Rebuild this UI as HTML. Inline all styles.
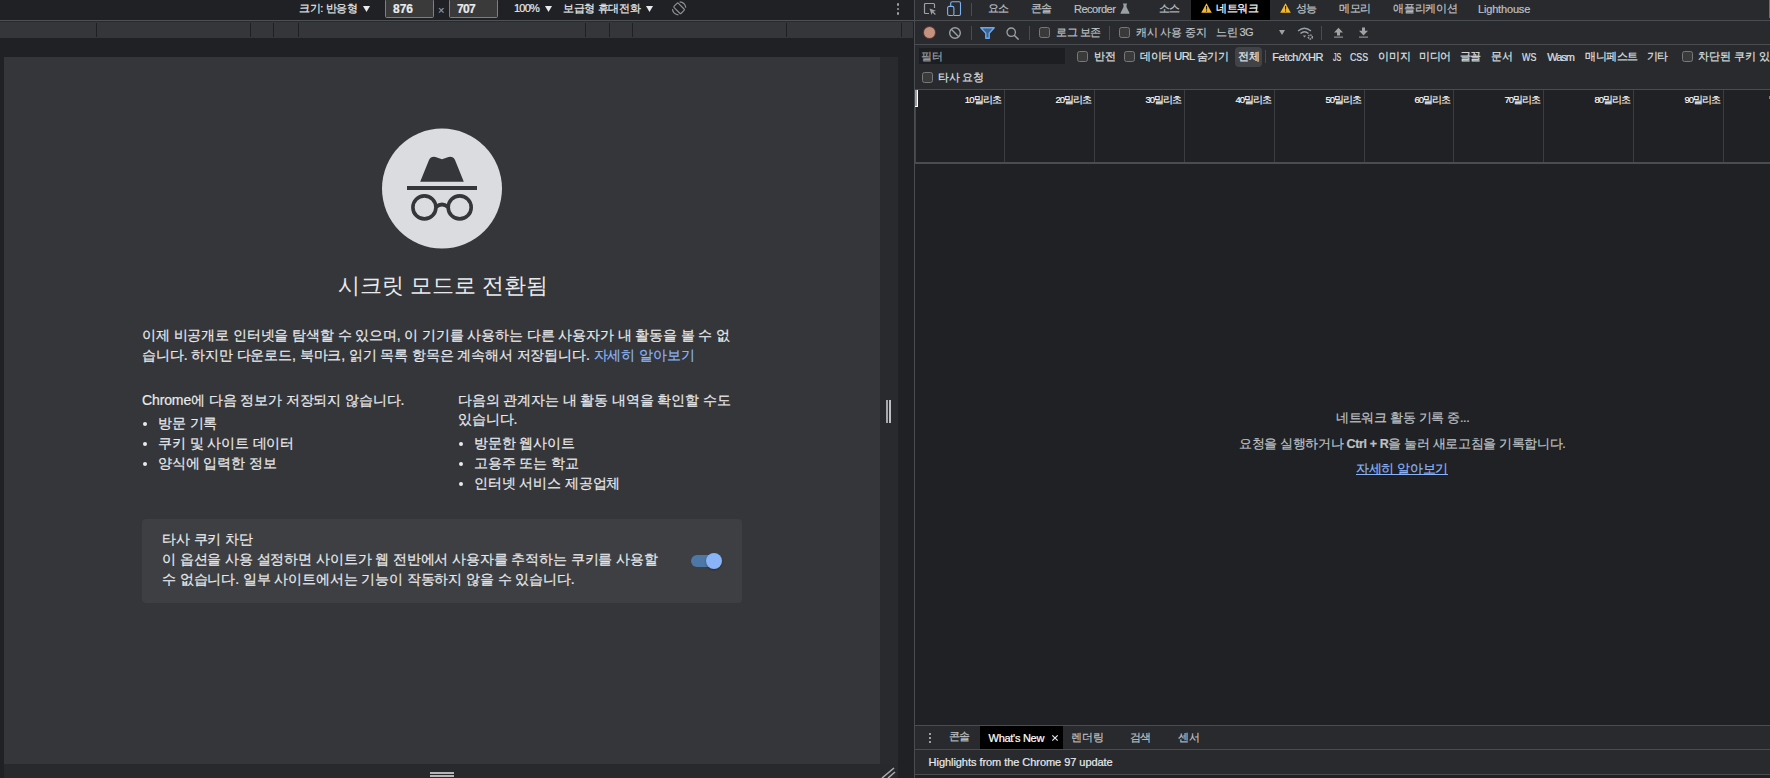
<!DOCTYPE html>
<html><head><meta charset="utf-8">
<style>
*{box-sizing:border-box;margin:0;padding:0}
html,body{width:1770px;height:778px;overflow:hidden;background:#202124;font-family:"Liberation Sans",sans-serif;color:#e8eaed}
.a{position:absolute}
.t{position:absolute;white-space:nowrap;line-height:1}
/* emulator */
#emtop{left:0;top:0;width:914px;height:20px;background:#202124}
#emline{left:0;top:20px;width:914px;height:1px;background:#4d5054;border-bottom:1px solid #292a2d;height:2px}
#ruler{left:0;top:22px;width:913px;height:16px;background:#35363a}
.tick{position:absolute;top:1px;width:1px;height:14px;background:#1f2023}
#page{left:4px;top:57px;width:876px;height:707px;background:#35363a}
#vscroll{left:880px;top:57px;width:18px;height:707px;background:#292a2d}
#hstrip{left:4px;top:764px;width:894px;height:14px;background:#28292d}
.etxt{font-size:11px;color:#e8eaed;-webkit-text-stroke-width:0.2px}
.inp{position:absolute;top:-2px;height:20px;background:#3b3a3a;border:1px solid #7d807f;border-radius:1.5px}
/* devtools */
#dtborder{left:914px;top:0;width:1px;height:778px;background:#494c50}
#dt{left:915px;top:0;width:855px;height:778px;background:#202124}
.tb{position:absolute;left:0;width:855px;background:#292a2d}
.hl{position:absolute;left:0;width:855px;height:1px;background:#494c50}
.dtx{font-size:11px;color:#bdc1c6;-webkit-text-stroke-width:0.2px}
.cb{position:absolute;width:11px;height:11px;border:1px solid #76787b;border-radius:2.5px;background:#3b3a3a}
.vsep{position:absolute;width:1px;height:14px;background:#494c50}
.ptx{font-size:14px;letter-spacing:-0.12px;color:#e8eaed;-webkit-text-stroke-width:0.2px}
.bul{position:absolute;width:4px;height:4px;border-radius:50%;background:#e8eaed}
.tl{font-size:9.5px;color:#fff;-webkit-text-stroke-width:0.15px}
</style></head><body>

<!-- ================= EMULATOR (left) ================= -->
<div id="emtop" class="a"></div>
<div id="emline" class="a"></div>
<div id="ruler" class="a">
  <div class="tick" style="left:96px"></div>
  <div class="tick" style="left:250px"></div>
  <div class="tick" style="left:273px"></div>
  <div class="tick" style="left:298px"></div>
  <div class="tick" style="left:585px"></div>
  <div class="tick" style="left:609px"></div>
  <div class="tick" style="left:632px"></div>
  <div class="tick" style="left:786px"></div>
  <div class="tick" style="left:901px"></div>
</div>
<div id="page" class="a"></div>
<div id="vscroll" class="a"></div>
<div id="hstrip" class="a"></div>

<!-- emulator toolbar -->
<div class="t etxt" style="left:299.0px;top:3px;letter-spacing:-0.33px">크기: 반응형</div>
<svg class="a" style="left:362.5px;top:5.5px" width="7" height="6" viewBox="0 0 7 6"><path d="M0 0 H7 L3.5 6 Z" fill="#e8eaed"/></svg>
<div class="a inp" style="left:385px;top:-1px;width:49px;height:19px"></div>
<div class="t etxt" style="left:393.0px;top:3px;font-size:12px;font-weight:bold">876</div>
<div class="t etxt" style="left:438px;top:5px;font-size:11px;color:#9aa0a6">&#215;</div>
<div class="a inp" style="left:449px;top:-1px;width:49px;height:19px"></div>
<div class="t etxt" style="left:457.0px;top:3px;font-size:12px;font-weight:bold;letter-spacing:-0.70px">707</div>
<div class="t etxt" style="left:514.0px;top:3px;letter-spacing:-0.80px">100%</div>
<svg class="a" style="left:545px;top:5.5px" width="7" height="6" viewBox="0 0 7 6"><path d="M0 0 H7 L3.5 6 Z" fill="#e8eaed"/></svg>
<div class="t etxt" style="left:563.0px;top:3px;letter-spacing:-0.33px">보급형 휴대전화</div>
<svg class="a" style="left:645.5px;top:5.5px" width="7" height="6" viewBox="0 0 7 6"><path d="M0 0 H7 L3.5 6 Z" fill="#e8eaed"/></svg>
<svg class="a" style="left:671px;top:1px" width="16" height="16" viewBox="0 0 16 16"><g fill="none" stroke="#8d9093" stroke-width="1.2"><rect x="3.1" y="4.3" width="10" height="6" rx="1" transform="rotate(45 8.1 7.3)"/><path d="M8.6 0.8 A6.8 6.8 0 0 1 14.8 6.6"/><path d="M1.4 8.2 A6.8 6.8 0 0 0 7.4 13.9"/></g></svg>
<div class="a" style="left:896.8px;top:3.3px;width:2.5px;height:2.5px;background:#9aa0a6;border-radius:50%"></div>
<div class="a" style="left:896.8px;top:7.8px;width:2.5px;height:2.5px;background:#9aa0a6;border-radius:50%"></div>
<div class="a" style="left:896.8px;top:12.3px;width:2.5px;height:2.5px;background:#9aa0a6;border-radius:50%"></div>

<!-- page content -->
<svg class="a" style="left:382px;top:128px" width="120" height="121" viewBox="382 128 120 121">
  <circle cx="442" cy="188.6" r="60" fill="#dadce0"/>
  <path d="M420.2,181.8 L429,160 Q431,156 435.5,157 L442,159.2 L448.5,157 Q453,156 455,160 L463.8,181.8 Z" fill="#35363a"/>
  <rect x="407" y="186" width="70" height="4" fill="#35363a"/>
  <circle cx="424.4" cy="207.4" r="11.5" fill="none" stroke="#35363a" stroke-width="3.6"/>
  <circle cx="459.7" cy="207.4" r="11.5" fill="none" stroke="#35363a" stroke-width="3.6"/>
  <path d="M436,207 Q442,202 448,207" fill="none" stroke="#35363a" stroke-width="3.8"/>
</svg>
<div class="t" id="title" style="left:338px;top:275px;font-size:21.8px;color:#e8eaed">시크릿 모드로 전환됨</div>
<div class="t ptx" style="left:142px;top:328px">이제 비공개로 인터넷을 탐색할 수 있으며, 이 기기를 사용하는 다른 사용자가 내 활동을 볼 수 없</div>
<div class="t ptx" style="left:142px;top:348px">습니다. 하지만 다운로드, 북마크, 읽기 목록 항목은 계속해서 저장됩니다. <span style="color:#8ab4f8">자세히 알아보기</span></div>
<div class="t ptx" style="left:142px;top:393px">Chrome에 다음 정보가 저장되지 않습니다.</div>
<div class="bul" style="left:143px;top:422px"></div><div class="t ptx" style="left:158px;top:416px">방문 기록</div>
<div class="bul" style="left:143px;top:442px"></div><div class="t ptx" style="left:158px;top:436px">쿠키 및 사이트 데이터</div>
<div class="bul" style="left:143px;top:462px"></div><div class="t ptx" style="left:158px;top:456px">양식에 입력한 정보</div>
<div class="t ptx" style="left:458px;top:393px">다음의 관계자는 내 활동 내역을 확인할 수도</div>
<div class="t ptx" style="left:458px;top:412px">있습니다.</div>
<div class="bul" style="left:458.5px;top:442px"></div><div class="t ptx" style="left:474px;top:436px">방문한 웹사이트</div>
<div class="bul" style="left:458.5px;top:462px"></div><div class="t ptx" style="left:474px;top:456px">고용주 또는 학교</div>
<div class="bul" style="left:458.5px;top:482px"></div><div class="t ptx" style="left:474px;top:476px">인터넷 서비스 제공업체</div>
<div class="a" style="left:142px;top:519px;width:600px;height:84px;background:#3d3f42;border-radius:4px"></div>
<div class="t ptx" style="left:162px;top:532px">타사 쿠키 차단</div>
<div class="t ptx" style="left:162px;top:552px">이 옵션을 사용 설정하면 사이트가 웹 전반에서 사용자를 추적하는 쿠키를 사용할</div>
<div class="t ptx" style="left:162px;top:572px">수 없습니다. 일부 사이트에서는 기능이 작동하지 않을 수 있습니다.</div>
<div class="a" style="left:691px;top:555px;width:30px;height:12px;background:#4d77a5;border-radius:6px"></div>
<div class="a" style="left:706px;top:553px;width:16px;height:16px;background:#8ab4f8;border-radius:50%;box-shadow:0 1px 2px rgba(0,0,0,.3)"></div>
<div class="a" style="left:886px;top:400px;width:2px;height:23px;background:#a6a8ab"></div>
<div class="a" style="left:889px;top:400px;width:2px;height:23px;background:#bcbec1"></div>
<div class="a" style="left:430px;top:772px;width:24px;height:2px;background:#b4b6b9"></div>
<div class="a" style="left:430px;top:775px;width:24px;height:2px;background:#b4b6b9"></div>
<svg class="a" style="left:880px;top:764px" width="18" height="14" viewBox="0 0 18 14"><path d="M2 14 L14 4 M8 14 L15 8" stroke="#a9abae" stroke-width="1.6"/></svg>


<!-- ================= DEVTOOLS (right) ================= -->
<div id="dtborder" class="a"></div>
<div id="dt" class="a">
  <div class="tb" style="top:0;height:20px"></div>
  <div class="hl" style="top:20px"></div>
  <div class="tb" style="top:21px;height:23px"></div>
  <div class="hl" style="top:44px"></div>
  <div class="tb" style="top:45px;height:44px"></div>
  <div class="hl" style="top:89px"></div>
  <div class="hl" style="top:162px;height:2px"></div>
  <div class="hl" style="top:725px"></div>
  <div class="tb" style="top:726px;height:23px"></div>
  <div class="hl" style="top:749px"></div>
  <div class="tb" style="top:750px;height:24px"></div>
  <div class="hl" style="top:774px"></div>
</div>

<!-- devtools tab bar -->
<svg class="a" style="left:923px;top:2px" width="14" height="14" viewBox="0 0 14 14"><path d="M6 11.5 H2.5 Q1.5 11.5 1.5 10.5 V2.5 Q1.5 1.5 2.5 1.5 H10.5 Q11.5 1.5 11.5 2.5 V6" fill="none" stroke="#9aa0a6" stroke-width="1.2"/><path d="M6.5 6.5 L13 8.7 L10.3 9.6 L12.8 12.1 L12 12.9 L9.5 10.4 L8.6 13 Z" fill="#9aa0a6"/></svg>
<svg class="a" style="left:946px;top:1px" width="16" height="16" viewBox="0 0 16 16"><g fill="none" stroke="#7cb2f4" stroke-width="1.1"><path d="M4.7 5 V2.3 Q4.7 0.8 6.2 0.8 H13 Q14.5 0.8 14.5 2.3 V13 Q14.5 14.5 13 14.5 H8"/><rect x="1.6" y="5.4" width="6.3" height="9.1" rx="1.6"/></g></svg>
<div class="vsep" style="left:971px;top:3px;height:13px"></div>
<div class="t dtx" style="left:988.0px;top:3px;letter-spacing:-1.20px">요소</div>
<div class="t dtx" style="left:1031.0px;top:3px;letter-spacing:-0.80px">콘솔</div>
<div class="t dtx" style="left:1074.0px;top:4px;letter-spacing:-0.49px">Recorder</div>
<svg class="a" style="left:1120px;top:3px" width="10" height="11" viewBox="0 0 10 11"><path d="M3 0.5 H7 V1.5 H6.5 V4 L9.5 10 Q9.8 10.7 9 10.7 H1 Q0.2 10.7 0.5 10 L3.5 4 V1.5 H3 Z" fill="#9aa0a6"/></svg>
<div class="t dtx" style="left:1158.8px;top:3px;letter-spacing:-1.20px">소스</div>
<div class="a" style="left:1191px;top:0;width:79px;height:20px;background:#000"></div>
<svg class="a" style="left:1201px;top:3px" width="11" height="10" viewBox="0 0 11 10"><path d="M5.5 0.3 L10.8 9.7 H0.2 Z" fill="#f2b72f"/><rect x="5" y="3" width="1.1" height="3.6" fill="#202124"/><rect x="5" y="7.4" width="1.1" height="1.2" fill="#202124"/></svg>
<div class="t dtx" style="left:1216.0px;top:3px;color:#fff;letter-spacing:-0.33px">네트워크</div>
<svg class="a" style="left:1280px;top:3px" width="11" height="10" viewBox="0 0 11 10"><path d="M5.5 0.3 L10.8 9.7 H0.2 Z" fill="#f2b72f"/><rect x="5" y="3" width="1.1" height="3.6" fill="#202124"/><rect x="5" y="7.4" width="1.1" height="1.2" fill="#202124"/></svg>
<div class="t dtx" style="left:1296.0px;top:3px;letter-spacing:-0.80px">성능</div>
<div class="t dtx" style="left:1339.0px;top:3px;letter-spacing:-0.40px">메모리</div>
<div class="t dtx" style="left:1393.0px;top:3px;letter-spacing:-0.22px">애플리케이션</div>
<div class="t dtx" style="left:1478.0px;top:4px;letter-spacing:-0.17px">Lighthouse</div>
<div class="a" style="left:1769px;top:0;width:1px;height:18px;background:#6b6e72"></div>

<!-- toolbar 2 -->
<div class="a" style="left:924px;top:27px;width:11px;height:11px;border-radius:50%;background:#c4937f;box-shadow:0 0 0 1px rgba(150,70,70,.55)"></div>
<svg class="a" style="left:948px;top:26px" width="14" height="14" viewBox="0 0 14 14"><circle cx="7" cy="7" r="5.3" fill="none" stroke="#9aa0a6" stroke-width="1.4"/><path d="M3.3 3.3 L10.7 10.7" stroke="#9aa0a6" stroke-width="1.4"/></svg>
<div class="vsep" style="left:971px;top:26px;height:14px"></div>
<svg class="a" style="left:980px;top:27px" width="15" height="12" viewBox="0 0 15 12"><path d="M0.8 0.8 H14.2 L9.2 6.3 V11.2 H5.8 V6.3 Z" fill="#3d6290" stroke="#6aa8f0" stroke-width="1.4" stroke-linejoin="round"/></svg>
<svg class="a" style="left:1006px;top:27px" width="14" height="13" viewBox="0 0 14 13"><circle cx="5.2" cy="5.2" r="4.2" fill="none" stroke="#9aa0a6" stroke-width="1.3"/><path d="M8.3 8.3 L12.6 12.6" stroke="#9aa0a6" stroke-width="1.5"/></svg>
<div class="vsep" style="left:1029px;top:26px;height:14px"></div>
<div class="cb" style="left:1039px;top:27px"></div>
<div class="t dtx" style="left:1056.0px;top:27px;letter-spacing:-0.45px">로그 보존</div>
<div class="vsep" style="left:1109px;top:26px;height:14px"></div>
<div class="cb" style="left:1119px;top:27px"></div>
<div class="t dtx" style="left:1136.0px;top:27px;letter-spacing:-0.20px">캐시 사용 중지</div>
<div class="t dtx" style="left:1216.2px;top:27px;letter-spacing:-0.60px">느린 3G</div>
<svg class="a" style="left:1279px;top:30px" width="6" height="5" viewBox="0 0 6 5"><path d="M0 0 H6 L3 5 Z" fill="#9aa0a6"/></svg>
<svg class="a" style="left:1297px;top:26px" width="17" height="14" viewBox="0 0 17 14"><g fill="none" stroke="#9aa0a6" stroke-width="1.4"><path d="M1 5 Q7.5 -0.5 14 5"/><path d="M3.5 7.5 Q7.5 4 11.5 7.5"/></g><path d="M5.8 9.6 H9.2 L7.5 11.4 Z" fill="#9aa0a6"/><circle cx="13.3" cy="11" r="2" fill="none" stroke="#9aa0a6" stroke-width="1.6" stroke-dasharray="1.4 0.7"/></svg>
<div class="vsep" style="left:1321px;top:26px;height:14px"></div>
<svg class="a" style="left:1333px;top:27px" width="11" height="11" viewBox="0 0 11 11"><path d="M5.5 0.8 L10 5.5 H7 V8.5 H4 V5.5 H1 Z" fill="#a0a3a3"/><rect x="1" y="9.6" width="9" height="1" fill="#a0a3a3"/></svg>
<svg class="a" style="left:1358px;top:27px" width="11" height="11" viewBox="0 0 11 11"><path d="M4 0.5 H7 V3.8 H10 L5.5 8.5 L1 3.8 H4 Z" fill="#a0a3a3"/><rect x="1" y="9.6" width="9" height="1" fill="#a0a3a3"/></svg>

<!-- filter row -->
<div class="a" style="left:919px;top:48px;width:146px;height:16px;background:#1d1e21"></div>
<div class="t dtx" style="left:921.0px;top:51px;color:#9aa0a6">필터</div>
<div class="cb" style="left:1077px;top:51px"></div>
<div class="t dtx" style="left:1093.8px;top:51px;color:#dfe1e4">반전</div>
<div class="cb" style="left:1124px;top:51px"></div>
<div class="t dtx" style="left:1140.0px;top:51px;letter-spacing:-0.47px;color:#dfe1e4">데이터 URL 숨기기</div>
<div class="a" style="left:1235px;top:47px;width:27px;height:20px;background:#424347;border-radius:4px"></div>
<div class="t dtx" style="left:1237.8px;top:51px;color:#e8eaed">전체</div>
<div class="vsep" style="left:1265px;top:50px;height:13px"></div>
<div class="t dtx" style="left:1272.2px;top:52px;letter-spacing:-0.31px;color:#dfe1e4">Fetch/XHR</div>
<div class="t dtx" style="left:1333px;top:52px;color:#dfe1e4;transform:scaleX(0.64);transform-origin:0 0">JS</div>
<div class="t dtx" style="left:1350px;top:52px;color:#dfe1e4;transform:scaleX(0.80);transform-origin:0 0">CSS</div>
<div class="t dtx" style="left:1378.0px;top:51px;color:#dfe1e4">이미지</div>
<div class="t dtx" style="left:1419.0px;top:51px;letter-spacing:-0.40px;color:#dfe1e4">미디어</div>
<div class="t dtx" style="left:1460.0px;top:51px;letter-spacing:-1.00px;color:#dfe1e4">글꼴</div>
<div class="t dtx" style="left:1491.0px;top:51px;color:#dfe1e4">문서</div>
<div class="t dtx" style="left:1522.4px;top:52px;color:#dfe1e4;transform:scaleX(0.81);transform-origin:0 0">WS</div>
<div class="t dtx" style="left:1547.3px;top:52px;letter-spacing:-1.06px;color:#dfe1e4">Wasm</div>
<div class="t dtx" style="left:1585.0px;top:51px;letter-spacing:-0.48px;color:#dfe1e4">매니페스트</div>
<div class="t dtx" style="left:1647.0px;top:51px;letter-spacing:-0.90px;color:#dfe1e4">기타</div>
<div class="cb" style="left:1682px;top:51px"></div>
<div class="t dtx" style="left:1698px;top:51px;color:#dfe1e4">차단된 쿠키 있는 요청</div>
<div class="cb" style="left:922px;top:72px"></div>
<div class="t dtx" style="left:938.0px;top:72px;letter-spacing:-0.20px;color:#dfe1e4">타사 요청</div>

<!-- timeline -->
<div class="a" style="left:915px;top:90px;width:3px;height:17px;background:#9ea3ab;border-right:1px solid #fff;border-bottom:1px solid #fff"></div>
<div class="a" style="left:915px;top:107px;width:1px;height:55px;background:#3d4566"></div>
<div class="a" style="left:1004px;top:90px;width:1px;height:72px;background:#3c3d40"></div>
<div class="t tl" style="left:964.8px;top:95px;letter-spacing:-0.85px">10밀리초</div>
<div class="a" style="left:1094px;top:90px;width:1px;height:72px;background:#3c3d40"></div>
<div class="t tl" style="left:1055.6px;top:95px;letter-spacing:-1.10px">20밀리초</div>
<div class="a" style="left:1184px;top:90px;width:1px;height:72px;background:#3c3d40"></div>
<div class="t tl" style="left:1145.6px;top:95px;letter-spacing:-1.10px">30밀리초</div>
<div class="a" style="left:1274px;top:90px;width:1px;height:72px;background:#3c3d40"></div>
<div class="t tl" style="left:1235.6px;top:95px;letter-spacing:-1.10px">40밀리초</div>
<div class="a" style="left:1364px;top:90px;width:1px;height:72px;background:#3c3d40"></div>
<div class="t tl" style="left:1325.6px;top:95px;letter-spacing:-1.10px">50밀리초</div>
<div class="a" style="left:1453px;top:90px;width:1px;height:72px;background:#3c3d40"></div>
<div class="t tl" style="left:1414.6px;top:95px;letter-spacing:-1.10px">60밀리초</div>
<div class="a" style="left:1543px;top:90px;width:1px;height:72px;background:#3c3d40"></div>
<div class="t tl" style="left:1504.6px;top:95px;letter-spacing:-1.10px">70밀리초</div>
<div class="a" style="left:1633px;top:90px;width:1px;height:72px;background:#3c3d40"></div>
<div class="t tl" style="left:1594.6px;top:95px;letter-spacing:-1.10px">80밀리초</div>
<div class="a" style="left:1723px;top:90px;width:1px;height:72px;background:#3c3d40"></div>
<div class="t tl" style="left:1684.6px;top:95px;letter-spacing:-1.10px">90밀리초</div>
<div class="a" style="left:1769px;top:96px;width:1px;height:3px;background:#3a8ee6"></div>

<!-- center message -->
<div class="t dtx" style="left:1336.0px;top:412px;font-size:12.5px;letter-spacing:-0.29px">네트워크 활동 기록 중...</div>
<div class="t dtx" style="left:1239.0px;top:438px;font-size:12.5px;letter-spacing:-0.35px">요청을 실행하거나 <b style="color:#bdc1c6">Ctrl + R</b>을 눌러 새로고침을 기록합니다.</div>
<div class="t dtx" style="left:1356.0px;top:463px;font-size:12.5px;color:#8ab4f8;text-decoration:underline;letter-spacing:-0.31px">자세히 알아보기</div>

<!-- drawer -->
<div class="a" style="left:929px;top:733px;width:2px;height:2px;background:#9aa0a6"></div>
<div class="a" style="left:929px;top:737px;width:2px;height:2px;background:#9aa0a6"></div>
<div class="a" style="left:929px;top:741px;width:2px;height:2px;background:#9aa0a6"></div>
<div class="t dtx" style="left:949.0px;top:731px;letter-spacing:-0.80px">콘솔</div>
<div class="a" style="left:980px;top:726px;width:83px;height:23px;background:#000"></div>
<div class="t dtx" style="left:988.6px;top:733px;color:#fff;letter-spacing:-0.29px">What's New</div>
<svg class="a" style="left:1051px;top:734px" width="8" height="8" viewBox="0 0 8 8"><path d="M1.3 1.3 L6.7 6.7 M6.7 1.3 L1.3 6.7" stroke="#e8eaed" stroke-width="1.15"/></svg>
<div class="t dtx" style="left:1071.0px;top:732px">렌더링</div>
<div class="t dtx" style="left:1130.0px;top:732px;letter-spacing:-0.60px">검색</div>
<div class="t dtx" style="left:1178.0px;top:732px">센서</div>
<div class="t dtx" style="left:928.6px;top:757px;color:#e8eaed;letter-spacing:-0.05px">Highlights from the Chrome 97 update</div>


</body></html>
